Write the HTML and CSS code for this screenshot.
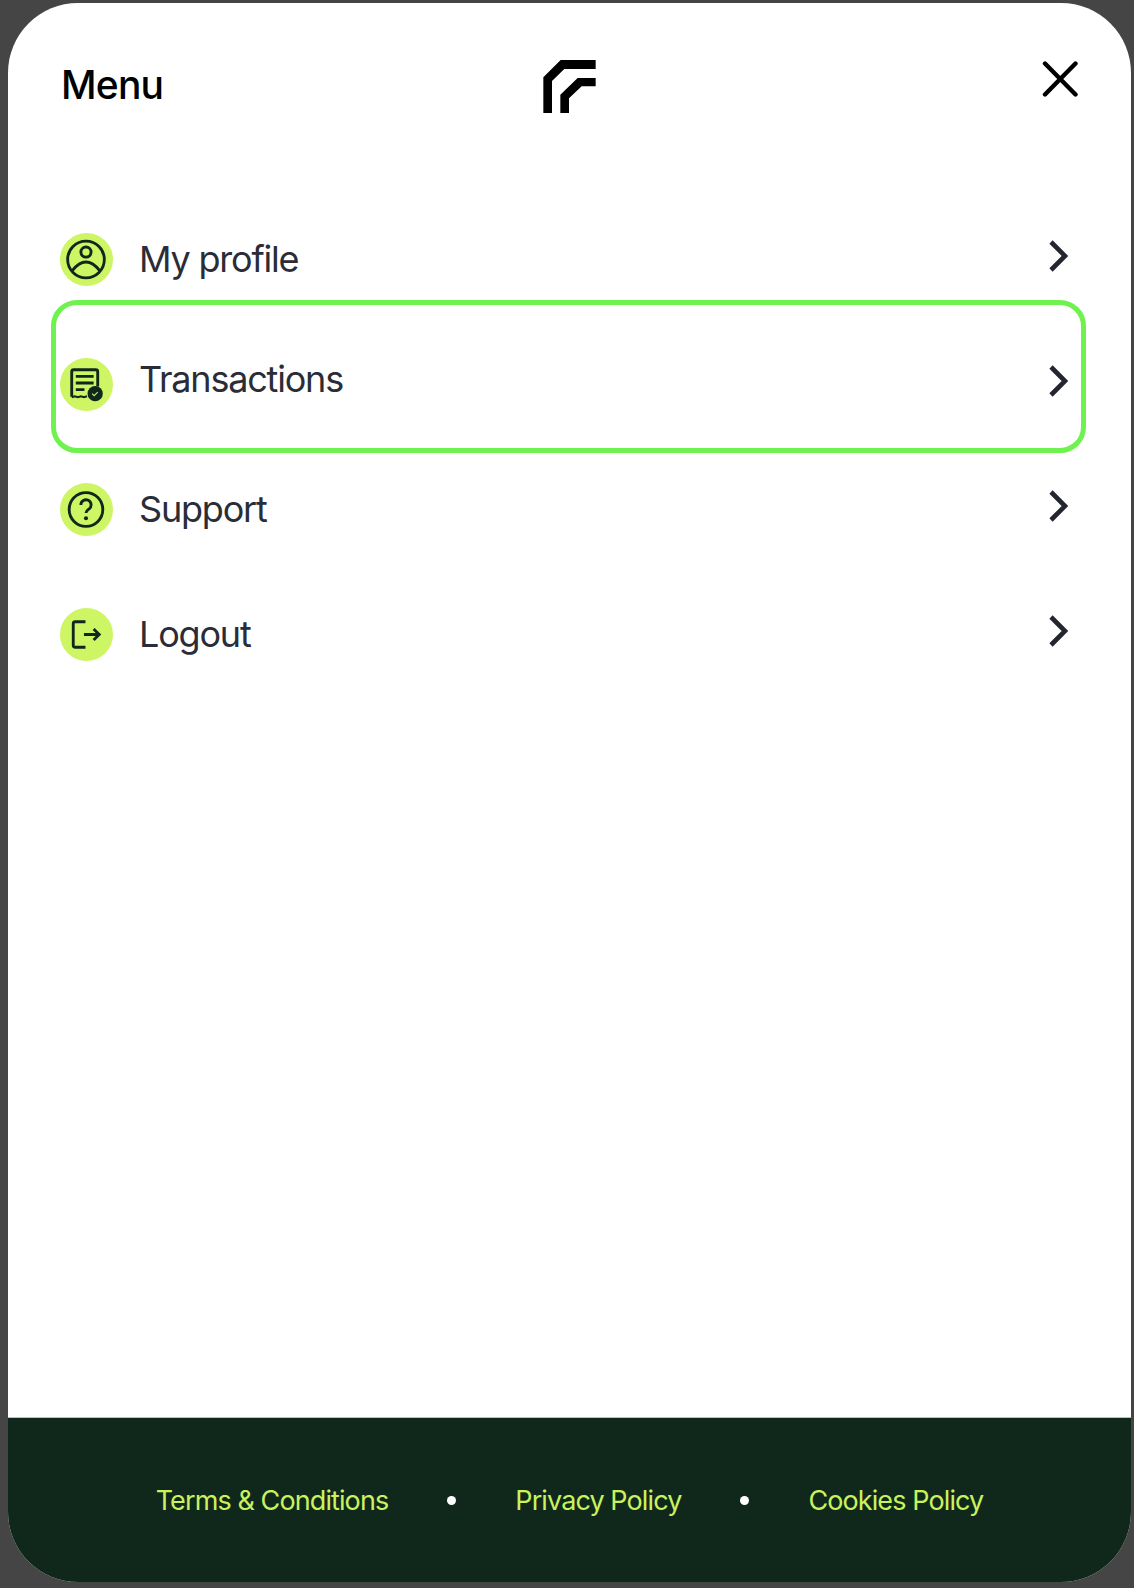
FILE: index.html
```html
<!DOCTYPE html>
<html lang="en">
<head>
    <meta charset="UTF-8">
    <meta name="viewport" content="width=device-width, initial-scale=1.0">
    <title>Menu</title>
    <link rel="stylesheet" href="styles.css">
</head>
<body>
    <div class="card">
        <div class="header">
            <h1 class="title">Menu</h1>
            <svg class="logo" viewBox="130 88 157 159" width="53" height="53">
                <path d="M130 247V140L182 88H287V115H193L156 151V247Z"/>
                <path d="M181 247V192L233 142H287V167H245L207 203V247Z"/>
            </svg>
            <svg class="close" viewBox="0 0 36 36" width="36" height="36">
                <path d="M3 2.500L33.500 33.500M33.500 2.500L3 33.500"/>
            </svg>
        </div>

        <div class="menu">
            <div class="row">
                <span class="icon">
                    <svg viewBox="0 0 52 52" width="53" height="53">
                        <circle cx="25.500" cy="26" r="18"/>
                        <circle cx="25.500" cy="18.700" r="5"/>
                        <path d="M12 37Q25.500 20 39 37"/>
                    </svg>
                </span>
                <span class="label">My profile</span>
                <svg class="chevron" viewBox="0 0 20 32" width="20" height="32"><path d="M3 2L17 16L3 30"/></svg>
            </div>

            <div class="row row-active">
                <span class="highlight"></span>
                <span class="icon">
                    <svg viewBox="0 0 52 52" width="53" height="53">
                        <path d="M11.500 38V13.500a2 2 0 0 1 2-2H35a2 2 0 0 1 2 2V28"/>
                        <path class="receipt-edge" d="M11.500 38.500l3-1 3 1 3-1 3 1 3-1"/>
                        <path d="M15.500 18H33M15.500 24.500H33M15.500 31H24"/>
                        <circle class="badge" cx="34.500" cy="35" r="7.500"/>
                        <path class="tick" d="M31.500 35l2 2 3.500-3.500"/>
                    </svg>
                </span>
                <span class="label">Transactions</span>
                <svg class="chevron" viewBox="0 0 20 32" width="20" height="32"><path d="M3 2L17 16L3 30"/></svg>
            </div>

            <div class="row">
                <span class="icon">
                    <svg viewBox="0 0 52 52" width="53" height="53">
                        <circle cx="25.500" cy="26" r="16.500"/>
                        <path d="M20.500 21.500a5 5 0 1 1 7.800 4.100c-1.700 1.100-2.800 1.800-2.800 3.900"/>
                        <circle class="dot" cx="25.500" cy="34.500" r="2"/>
                    </svg>
                </span>
                <span class="label">Support</span>
                <svg class="chevron" viewBox="0 0 20 32" width="20" height="32"><path d="M3 2L17 16L3 30"/></svg>
            </div>

            <div class="row">
                <span class="icon">
                    <svg viewBox="0 0 52 52" width="53" height="53">
                        <path d="M25 13.500H15a2 2 0 0 0-2 2V36.500a2 2 0 0 0 2 2H25"/>
                        <path d="M23.500 26H38.500M33 20.500L38.500 26L33 31.500"/>
                    </svg>
                </span>
                <span class="label">Logout</span>
                <svg class="chevron" viewBox="0 0 20 32" width="20" height="32"><path d="M3 2L17 16L3 30"/></svg>
            </div>
        </div>

        <div class="footer">
            <span class="footer-link">Terms &amp; Conditions</span>
            <span class="bullet"></span>
            <span class="footer-link">Privacy Policy</span>
            <span class="bullet"></span>
            <span class="footer-link">Cookies Policy</span>
        </div>
    </div>
</body>
</html>
```

FILE: styles.css
```css
html, body {
    margin: 0;
    height: 1588px;
    overflow: hidden;
    background: #454545;
    font-family: Inter, "Liberation Sans", sans-serif;
}

.card {
    display: flex;
    flex-direction: column;
    width: 1123px;
    height: 1579px;
    margin: 3px 0 0 8px;
    background: white;
    border-radius: 70px;
    overflow: hidden;
}

.header {
    display: grid;
    grid-template-columns: 1fr auto 1fr;
    align-items: start;
    height: 230px;
    padding: 56px 53px 0;
    box-sizing: border-box;
}

.title {
    margin: 2px 0 0;
    font-size: 39px;
    line-height: 48px;
    font-weight: 500;
    letter-spacing: -0.8px;
    color: #000;
}

.logo {
    fill: #000;
    margin-top: 1px;
}

.close {
    justify-self: end;
    fill: none;
    stroke: #000;
    stroke-width: 4.4;
    stroke-linecap: round;
    margin-top: 2px;
}

.menu {
    flex: 1;
    display: flex;
    flex-direction: column;
    gap: 72px;
    padding: 0 53px 0 52px;
}

.row {
    position: relative;
    display: flex;
    align-items: center;
    height: 53px;
}

.highlight {
    position: absolute;
    left: -9px;
    right: -8px;
    top: -58px;
    height: 143px;
    border: 5px solid #6ff24f;
    border-radius: 26px;
}

.icon {
    width: 53px;
    height: 53px;
    border-radius: 50%;
    background: #cdf564;
    flex-shrink: 0;
}

.icon svg {
    display: block;
    fill: none;
    stroke: #10281b;
    stroke-width: 2.8;
}

.icon .receipt-edge {
    stroke-width: 2;
}

.icon .badge {
    fill: #10281b;
    stroke: none;
}

.icon .tick {
    stroke: #cdf564;
    stroke-width: 1;
}

.icon .dot {
    fill: #10281b;
    stroke: none;
}

.label {
    flex: 1;
    margin-left: 26px;
    margin-bottom: 2px;
    font-size: 36px;
    line-height: 44px;
    letter-spacing: -1.2px;
    color: #2a2d37;
}

.row-active .label {
    margin-bottom: 12px;
}

.chevron {
    fill: none;
    stroke: #23262f;
    stroke-width: 4.6;
    margin-right: 10px;
    margin-bottom: 8px;
}

.footer {
    display: flex;
    align-items: center;
    justify-content: center;
    gap: 59px;
    height: 165px;
    padding-top: 1px;
    background: #10281b;
    border-top: 1px solid #b9c2bd;
    box-sizing: border-box;
}

.footer-link {
    font-size: 27px;
    line-height: 36px;
    letter-spacing: -0.9px;
    color: #c9f25d;
}

.bullet {
    width: 9px;
    height: 9px;
    border-radius: 50%;
    background: white;
}
```
